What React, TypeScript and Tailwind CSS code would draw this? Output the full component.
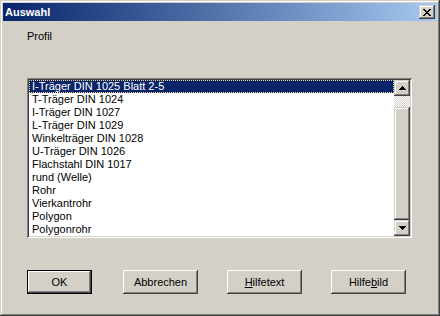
const items = [
  "I-Träger DIN 1025 Blatt 2-5",
  "T-Träger DIN 1024",
  "I-Träger DIN 1027",
  "L-Träger DIN 1029",
  "Winkelträger DIN 1028",
  "U-Träger DIN 1026",
  "Flachstahl DIN 1017",
  "rund (Welle)",
  "Rohr",
  "Vierkantrohr",
  "Polygon",
  "Polygonrohr",
]

const raised =
  "shadow-[inset_-1px_-1px_#404040,inset_1px_1px_#ffffff,inset_-2px_-2px_#808080,inset_2px_2px_#d4d0c8]"
const raisedBar =
  "shadow-[inset_-1px_-1px_#404040,inset_1px_1px_#d4d0c8,inset_-2px_-2px_#808080,inset_2px_2px_#ffffff]"

function Arrow({ down }: { down?: boolean }) {
  return (
    <svg width="7" height="4" viewBox="0 0 7 4" className={down ? "rotate-180" : ""}>
      <path d="M3 0h1v1h1v1h1v1h1v1H0V3h1V2h1V1h1z" fill="#000" />
    </svg>
  )
}

function DlgButton({ children, isDefault, w }: { children: React.ReactNode; isDefault?: boolean; w: string }) {
  return (
    <div
      className={`${w} h-[24px] flex items-center justify-center bg-[#d4d0c8] ${
        isDefault ? "border border-black" : ""
      }`}
    >
      <div className={`w-full h-full flex items-center justify-center ${raised}`}>
        <span className="text-[11px] leading-[13px] text-black">{children}</span>
      </div>
    </div>
  )
}

export default function App() {
  return (
    <div
      className={`w-[440px] h-[316px] bg-[#d4d0c8] p-[3px] flex flex-col ${raisedBar}`}
      style={{ fontFamily: '"Liberation Sans", Arial, sans-serif' }}
    >
      {/* Title bar */}
      <div className="h-[18px] flex items-center justify-between bg-linear-to-r from-[#0a246a] to-[#a6caf0] pl-[2px] pr-[2px]">
        <span className="text-white font-bold text-[11px] leading-[13px]">Auswahl</span>
        <div className={`w-[16px] h-[14px] bg-[#d4d0c8] flex items-center justify-center ${raisedBar}`}>
          <svg width="8" height="7" viewBox="0 0 8 7">
            <path d="M0 0h2v1h1v1h2V1h1V0h2v1H7v1H6v1H5v1h1v1h1v1h1v1H6V6H5V5H3v1H2v1H0V6h1V5h1V4h1V3H2V2H1V1H0z" fill="#000" />
          </svg>
        </div>
      </div>

      {/* Body */}
      <div className="flex flex-col pl-[24px]">
        <div className="mt-[9px] text-[11px] leading-[13px] text-black">Profil</div>

        {/* List box */}
        <div className="mt-[35px] w-[385px] h-[160px] p-[2px] bg-white flex shadow-[inset_1px_1px_#808080,inset_-1px_-1px_#ffffff,inset_2px_2px_#404040,inset_-2px_-2px_#d4d0c8]">
          <div className="flex-1 flex flex-col bg-white">
            {items.map((it, i) => (
              <div
                key={it}
                className={`h-[13px] pl-[3px] text-[11px] leading-[13px] whitespace-nowrap ${
                  i === 0
                    ? "bg-[#0a246a] text-white outline outline-1 outline-dotted outline-[#f5db95] -outline-offset-1"
                    : "text-black"
                }`}
              >
                {it}
              </div>
            ))}
          </div>
          <div className="w-[16px] flex flex-col">
            <div className={`h-[16px] bg-[#d4d0c8] flex items-center justify-center ${raisedBar}`}>
              <Arrow />
            </div>
            <div className="h-[11px] bg-[repeating-conic-gradient(#d4d0c8_0%_25%,#ffffff_0%_50%)] bg-[length:2px_2px]" />
            <div className={`flex-1 bg-[#d4d0c8] ${raisedBar}`} />
            <div className={`h-[16px] bg-[#d4d0c8] flex items-center justify-center ${raisedBar}`}>
              <Arrow down />
            </div>
          </div>
        </div>

        {/* Buttons */}
        <div className="mt-[32px] flex">
          <DlgButton isDefault w="w-[65px]">OK</DlgButton>
          <div className="ml-[31px]">
            <DlgButton w="w-[75px]">Abbrechen</DlgButton>
          </div>
          <div className="ml-[29px]">
            <DlgButton w="w-[75px]">
              <u>H</u>ilfetext
            </DlgButton>
          </div>
          <div className="ml-[29px]">
            <DlgButton w="w-[75px]">
              Hilfe<u>b</u>ild
            </DlgButton>
          </div>
        </div>
      </div>
    </div>
  )
}
